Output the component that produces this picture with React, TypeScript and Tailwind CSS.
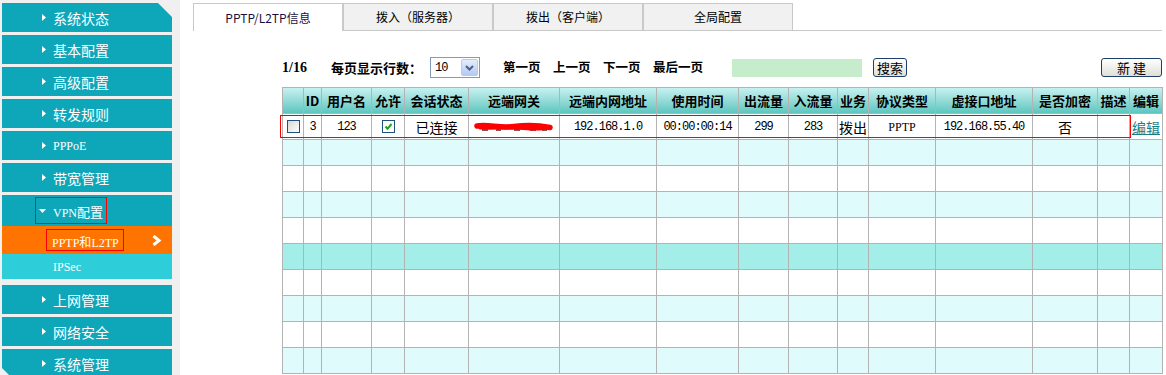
import React from "react";

const mono = "font-['Liberation_Mono','Noto_Sans_CJK_SC',monospace]";
const serif = "font-['Liberation_Serif','Noto_Sans_CJK_SC',serif]";

function RightArrow() {
  return (
    <svg width="4" height="7" viewBox="0 0 4 7" className="shrink-0">
      <polygon points="0,0 4,3.5 0,7" fill="#ffffff" />
    </svg>
  );
}

function DownArrow() {
  return (
    <svg width="7" height="4" viewBox="0 0 7 4" className="shrink-0">
      <polygon points="0,0 7,0 3.5,4" fill="#ffffff" />
    </svg>
  );
}

function NavItem({ label, variant }: { label: string; variant?: "first" | "last" }) {
  const clip =
    variant === "first"
      ? "[clip-path:polygon(0_0,calc(100%_-_14px)_0,100%_14px,100%_100%,0_100%)]"
      : variant === "last"
      ? "[clip-path:polygon(0_0,100%_0,100%_100%,10px_100%,0_calc(100%_-_10px))]"
      : "";
  return (
    <div className={`h-[29px] mb-[3px] bg-[#0ea7ba] flex items-center pl-[40px] text-white ${clip}`}>
      <RightArrow />
      <span className="ml-[7px] text-[14px] leading-none whitespace-nowrap">{label}</span>
    </div>
  );
}

function Checkbox({ checked }: { checked?: boolean }) {
  return (
    <span
      className={`inline-flex items-center justify-center w-[13px] h-[13px] border border-[#1c5180] ${
        checked ? "bg-white" : "bg-gradient-to-br from-[#d8d8d2] to-white"
      }`}
    >
      {checked && (
        <svg width="9" height="9" viewBox="0 0 9 9">
          <path d="M1.5 4.5 L3.5 6.8 L7.5 2" stroke="#21a121" strokeWidth="2" fill="none" />
        </svg>
      )}
    </span>
  );
}

const headers = [
  "",
  "ID",
  "用户名",
  "允许",
  "会话状态",
  "远端网关",
  "远端内网地址",
  "使用时间",
  "出流量",
  "入流量",
  "业务",
  "协议类型",
  "虚接口地址",
  "是否加密",
  "描述",
  "编辑",
];

const rowBgs = [
  "bg-white",
  "bg-[#dffbfb]",
  "bg-white",
  "bg-[#dffbfb]",
  "bg-white",
  "bg-[#a4eeea]",
  "bg-white",
  "bg-[#dffbfb]",
  "bg-white",
  "bg-[#dffbfb]",
];

function Scribble() {
  return (
    <svg width="80" height="12" viewBox="0 0 80 12">
      <path d="M8 9 L14 9 M22 9 L27 9 M40 9 L46 9 M56 9 L62 9 M68 9 L73 9" stroke="#6a1a1a" strokeWidth="1.5" />
      <path d="M3 5 C 14 3, 26 7.5, 40 5.5 S 64 4, 76 6.5" stroke="#ff0000" strokeWidth="5.5" strokeLinecap="round" fill="none" />
      <path d="M6 7 C 20 8, 34 6, 50 7.5 S 66 8, 74 7" stroke="#ff0000" strokeWidth="3" strokeLinecap="round" fill="none" />
    </svg>
  );
}

export default function App() {
  const numCls = `${mono} text-[12px] tracking-[-1px]`;
  const dataRow: React.ReactNode[] = [
    <Checkbox key="c1" />,
    <span key="id" className={numCls}>3</span>,
    <span key="u" className={numCls}>123</span>,
    <Checkbox key="c2" checked />,
    <span key="s" className="text-[14px]">已连接</span>,
    <Scribble key="g" />,
    <span key="ip" className={numCls}>192.168.1.0</span>,
    <span key="t" className={numCls}>00:00:00:14</span>,
    <span key="o" className={numCls}>299</span>,
    <span key="i" className={numCls}>283</span>,
    <span key="b" className="text-[14px]">拨出</span>,
    <span key="p" className={`${serif} text-[12px]`}>PPTP</span>,
    <span key="v" className={numCls}>192.168.55.40</span>,
    <span key="e" className="text-[14px]">否</span>,
    <span key="d"></span>,
    <span key="ed" className="text-[14px] text-[#1b7e86] underline">编辑</span>,
  ];

  return (
    <div className="flex w-[1166px] h-[375px] overflow-hidden bg-white text-black font-['Noto_Sans_CJK_SC',sans-serif]">
      {/* Sidebar */}
      <aside className="w-[180px] shrink-0 bg-[#f0f0f0] pt-[3px] pl-[2px]">
        <div className="w-[170px]">
          <NavItem label="系统状态" variant="first" />
          <NavItem label="基本配置" />
          <NavItem label="高级配置" />
          <NavItem label="转发规则" />
          <div className="h-[29px] mb-[3px] bg-[#0ea7ba] flex items-center pl-[40px] text-white">
            <RightArrow />
            <span className={`ml-[7px] text-[12px] leading-none ${serif}`}>PPPoE</span>
          </div>
          <NavItem label="带宽管理" />
          <div className="h-[31px] bg-[#0ea7ba] flex items-center pl-[33px] text-white">
            <div className="h-[27px] w-[72px] border border-[#ff0000] flex items-center pl-[3px] whitespace-nowrap">
              <DownArrow />
              <span className="ml-[7px] leading-none whitespace-nowrap">
                <span className={`${serif} text-[12px]`}>VPN</span>
                <span className="text-[13px]">配置</span>
              </span>
            </div>
          </div>
          <div className="h-[28px] bg-[#ff7400] flex items-center pl-[44px] pr-[10px] text-white">
            <div className="h-[22px] w-[78px] border border-[#ff0000] flex items-center pl-[5px]">
              <span className="leading-none whitespace-nowrap">
                <span className={`${serif} text-[12px]`}>PPTP</span>
                <span className="text-[12px]">和</span>
                <span className={`${serif} text-[12px]`}>L2TP</span>
              </span>
            </div>
            <svg width="11" height="11" viewBox="0 0 11 11" className="ml-auto">
              <path d="M2.5 1 L8 5.5 L2.5 10" stroke="#ffffff" strokeWidth="3" fill="none" />
            </svg>
          </div>
          <div className="h-[25px] bg-[#2dcdda] flex items-center pl-[51px] text-white mb-[6px]">
            <span className={`${serif} text-[12px] leading-none`}>IPSec</span>
          </div>
          <NavItem label="上网管理" />
          <NavItem label="网络安全" />
          <NavItem label="系统管理" variant="last" />
        </div>
      </aside>

      {/* Main */}
      <main className="flex-1 min-w-0">
        {/* Tabs */}
        <div className="flex pt-[3px] pl-[13px] pr-[4px] h-[31px]">
          <div className="w-[150px] h-[28px] bg-white border-t border-l border-r border-[#c9c9c9] flex items-center justify-center text-[12px] text-[#1a1040]">
            PPTP/L2TP信息
          </div>
          <div className="w-[150px] h-[28px] bg-[#f1f1f1] border border-[#c9c9c9] flex items-center justify-center text-[12px]">
            拨入（服务器）
          </div>
          <div className="w-[150px] h-[28px] bg-[#f1f1f1] border border-[#c9c9c9] flex items-center justify-center text-[12px]">
            拨出（客户端）
          </div>
          <div className="w-[150px] h-[28px] bg-[#f1f1f1] border border-[#c9c9c9] flex items-center justify-center text-[12px]">
            全局配置
          </div>
          <div className="flex-1 h-[28px] border-b border-[#c9c9c9]" />
        </div>

        <div className="ml-[102px] w-[881px]">
          {/* Toolbar */}
          <div className="mt-[26px] h-[21px] flex items-center font-bold text-[13px] leading-none">
            <span className="w-[49px] font-['Liberation_Serif',serif] text-[14px]">1/16</span>
            <span className="w-[99px]">每页显示行数：</span>
            <div className="w-[50px] h-[21px] border border-[#7f9db9] bg-white flex items-center font-normal">
              <span className={`${mono} text-[12px] ml-[4px] tracking-[-1px]`}>10</span>
              <div className="ml-auto mr-[1px] w-[17px] h-[17px] rounded-[2px] border border-[#b6cbf0] bg-gradient-to-b from-[#e4edfd] to-[#b3caf3] flex items-center justify-center">
                <svg width="9" height="6" viewBox="0 0 9 6">
                  <path d="M1 1 L4.5 4.5 L8 1" stroke="#4d6185" strokeWidth="2" fill="none" />
                </svg>
              </div>
            </div>
            <span className="ml-[23px] w-[50px] text-[12.5px]">第一页</span>
            <span className="w-[50px] text-[12.5px]">上一页</span>
            <span className="w-[50px] text-[12.5px]">下一页</span>
            <span className="w-[79px] text-[12.5px]">最后一页</span>
            <div className="w-[130px] h-[18px] bg-[#c6edcb]" />
            <div className="ml-[11px] w-[34px] h-[19px] rounded-[3px] border border-[#1e3f6c] bg-gradient-to-b from-white to-[#e0e0d8] flex items-center justify-center font-normal text-[13px]">
              搜索
            </div>
            <div className="ml-auto mr-[1px] w-[61px] h-[19px] rounded-[3px] border border-[#1e3f6c] bg-gradient-to-b from-white to-[#e0e0d8] flex items-center justify-center font-normal text-[13px]">
              新&nbsp;建
            </div>
          </div>

          {/* Table */}
          <div className="relative mt-[9px]">
            <div className="grid grid-cols-[20px_17px_49px_32px_63px_90px_96px_81px_49px_48px_30px_66px_96px_64px_31px_32px] auto-rows-[25px] gap-px bg-[#b3b3b3] border border-[#b3b3b3]">
              {headers.map((h, i) => (
                <div
                  key={`h${i}`}
                  className="bg-gradient-to-b from-[#c6f1f1] to-[#5bc6bf] flex items-center justify-center text-[13px] font-bold leading-none whitespace-nowrap overflow-hidden"
                >
                  {h}
                </div>
              ))}
              {rowBgs.map((bg, r) =>
                headers.map((_, c) => (
                  <div
                    key={`r${r}c${c}`}
                    className={`${bg} flex items-center justify-center leading-none whitespace-nowrap overflow-hidden`}
                  >
                    {r === 0 ? dataRow[c] : null}
                  </div>
                ))
              )}
            </div>
            <div className="absolute left-[-2px] top-[28px] w-[851px] h-[23px] border border-[#ff0000] pointer-events-none" />
          </div>
        </div>
      </main>
    </div>
  );
}
